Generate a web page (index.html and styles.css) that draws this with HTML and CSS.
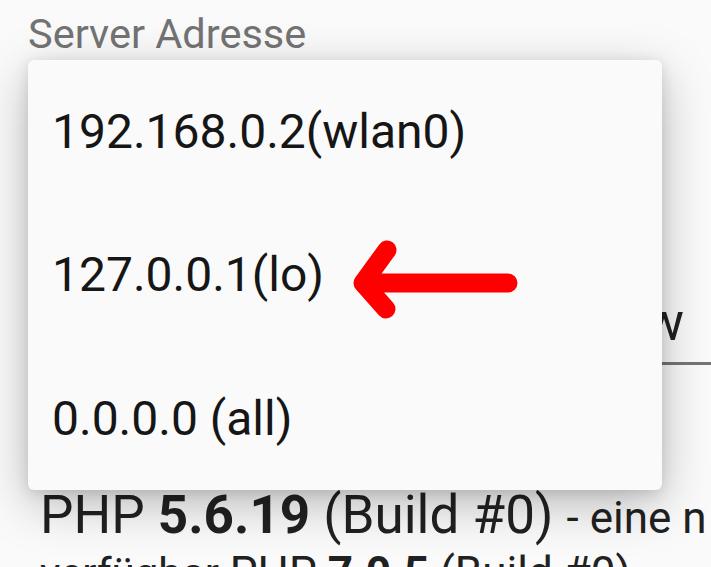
FILE: index.html
```html
<!DOCTYPE html>
<html lang="de">
<head>
<meta charset="utf-8">
<title>Server Adresse</title>
<link rel="stylesheet" href="styles.css">
</head>
<body>
<div class="page">
  <div class="label">Server Adresse</div>
  <div class="field"><span class="field-text">Show</span></div>
  <div class="info">
    <div class="line1">PHP <b>5.6.19</b> (Build #0) <span class="small">- eine neuere Version ist</span></div>
    <div class="line2"><span class="word">verfügbar</span> PHP <b>7.0.5</b> (Build #0)</div>
  </div>
</div>
<div class="menu">
  <div class="item">192.168.0.2(wlan0)</div>
  <div class="item">127.0.0.1(lo)</div>
  <div class="item">0.0.0.0 (all)</div>
  <svg class="arrow" width="634" height="430" viewBox="0 0 634 430">
    <path d="M480 223 L335 223 M359 190 L335 223 L358 249" fill="none" stroke="#ff0000" stroke-width="19" stroke-linecap="round" stroke-linejoin="round"/>
  </svg>
</div>
</body>
</html>
```
FILE: styles.css
```css
html, body {
  margin: 0;
  padding: 0;
  width: 711px;
  height: 567px;
  overflow: hidden;
  background: #fafafa;
  font-family: Roboto, "Noto Sans", sans-serif;
}
.page {
  display: flex;
  flex-direction: column;
}
.label {
  margin: 10px 0 0 28px;
  font-size: 41.5px;
  line-height: 48px;
  color: #737373;
}
.field {
  margin: 232px 0 0 40px;
  height: 72px;
  border-bottom: 3px solid #757575;
  display: flex;
  justify-content: flex-end;
  padding-right: 27px;
}
.field-text {
  font-size: 53px;
  line-height: 64px;
  color: #212121;
}
.info {
  margin: 120px 0 0 40px;
  width: 665px;
  overflow: hidden;
  color: #212121;
  white-space: nowrap;
}
.info b {
  font-weight: 700;
}
.line1 {
  font-size: 53px;
  line-height: 61px;
}
.small {
  font-size: 44px;
  line-height: 1;
}
.line2 {
  font-size: 44px;
  line-height: 54px;
}
.word {
  font-size: 42px;
}
.menu {
  position: absolute;
  left: 28px;
  top: 60px;
  width: 634px;
  height: 430px;
  background: #fafafa;
  border-radius: 6px;
  box-shadow: 0 14px 50px rgba(0,0,0,0.26), 0 3px 14px rgba(0,0,0,0.12);
  display: flex;
  flex-direction: column;
}
.item {
  height: 143.33px;
  display: flex;
  align-items: center;
  padding-left: 24px;
  font-size: 48px;
  color: #161616;
}
.arrow {
  position: absolute;
  left: 0;
  top: 0;
}
```
